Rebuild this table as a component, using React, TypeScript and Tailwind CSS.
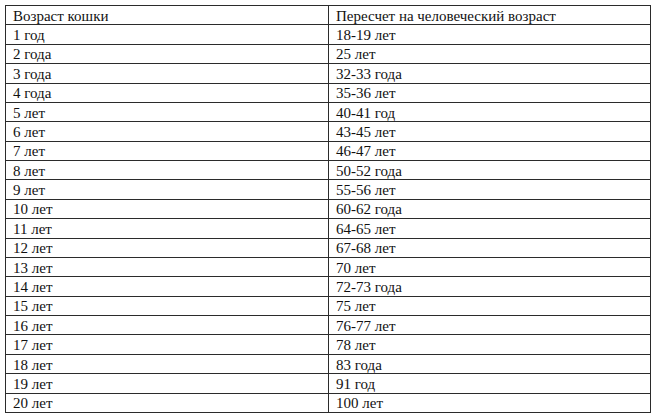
import React from 'react';

const rows: [string, string][] = [
  ['Возраст кошки', 'Пересчет на человеческий возраст'],
  ['1 год', '18-19 лет'],
  ['2 года', '25 лет'],
  ['3 года', '32-33 года'],
  ['4 года', '35-36 лет'],
  ['5 лет', '40-41 год'],
  ['6 лет', '43-45 лет'],
  ['7 лет', '46-47 лет'],
  ['8 лет', '50-52 года'],
  ['9 лет', '55-56 лет'],
  ['10 лет', '60-62 года'],
  ['11 лет', '64-65 лет'],
  ['12 лет', '67-68 лет'],
  ['13 лет', '70 лет'],
  ['14 лет', '72-73 года'],
  ['15 лет', '75 лет'],
  ['16 лет', '76-77 лет'],
  ['17 лет', '78 лет'],
  ['18 лет', '83 года'],
  ['19 лет', '91 год'],
  ['20 лет', '100 лет'],
];

const App = () => {
  return (
    <div className="font-serif w-[658px] h-[417px] bg-white text-[15px] text-[#111]">
      <div className="font-['Liberation_Serif']">
        <div className="pt-[5px] pl-[5px]">
          <div className="w-[646px] h-[408px] border-t border-l border-[#2b2b2b] grid grid-cols-[323px_1fr] grid-rows-[repeat(21,minmax(0,1fr))]">
            {rows.map(([a, b], i) => (
              <React.Fragment key={i}>
                <div className="border-r border-b border-[#2b2b2b] pl-[7px] pt-[2px] flex items-center leading-none whitespace-nowrap">
                  {a}
                </div>
                <div className="border-r border-b border-[#2b2b2b] pl-[7px] pt-[2px] flex items-center leading-none whitespace-nowrap">
                  {b}
                </div>
              </React.Fragment>
            ))}
          </div>
        </div>
      </div>
    </div>
  );
};

export default App;
